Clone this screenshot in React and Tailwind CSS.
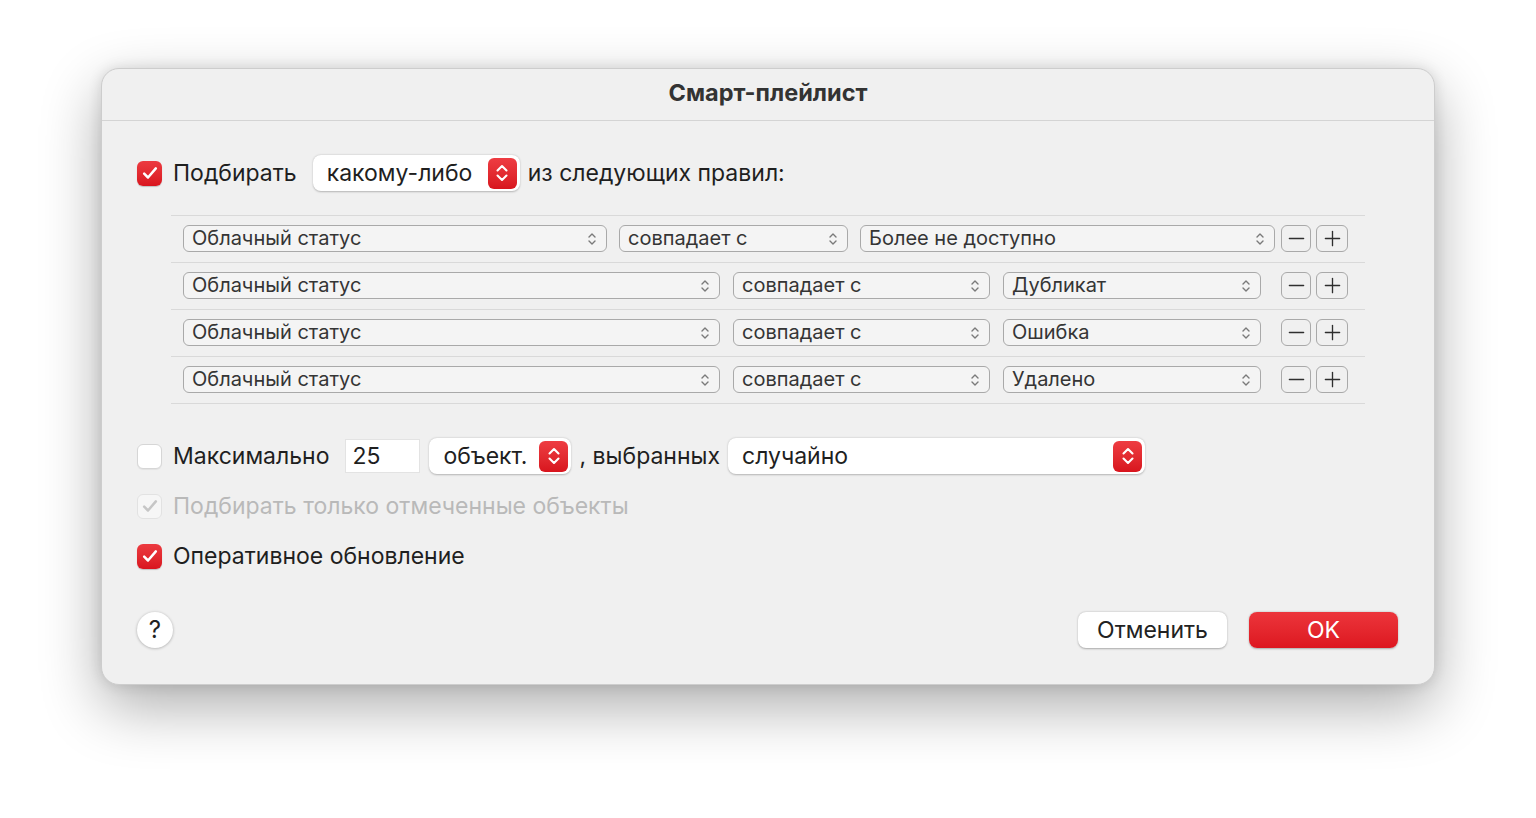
const FONT = { fontFamily: 'Inter, "Noto Sans", sans-serif' };

const Check = ({ color = '#fff' }) => (
  <svg viewBox="0 0 24 24" className="w-[20px] h-[20px]" fill="none" stroke={color} strokeWidth="3" strokeLinecap="round" strokeLinejoin="round">
    <path d="M5 12.8l4.6 4.6L19 6.5" />
  </svg>
);

const Checkbox = ({ state }) => {
  if (state === 'on') {
    return (
      <div className="w-[25px] h-[25px] rounded-[6px] flex items-center justify-center shrink-0 bg-gradient-to-b from-[#ec3a40] to-[#d9141e] shadow-[0_1px_1px_rgba(0,0,0,0.2)]">
        <Check />
      </div>
    );
  }
  if (state === 'disabled') {
    return (
      <div className="w-[25px] h-[25px] rounded-[6px] flex items-center justify-center shrink-0 bg-[#f6f6f6] border border-[#e2e2e2]">
        <Check color="#c6c6c6" />
      </div>
    );
  }
  return <div className="w-[25px] h-[25px] rounded-[6px] shrink-0 bg-white border border-[#d6d6d6] shadow-[0_1px_1px_rgba(0,0,0,0.06)]" />;
};

const Stepper = () => (
  <div className="w-[29px] h-[31px] rounded-[6px] flex items-center justify-center shrink-0 bg-gradient-to-b from-[#ee3c42] to-[#d8141d]">
    <svg viewBox="0 0 16 22" className="w-[16px] h-[22px]" fill="none" stroke="#fff" strokeWidth="2.1" strokeLinecap="round" strokeLinejoin="round">
      <path d="M3.5 8.5L8 4l4.5 4.5" />
      <path d="M3.5 13.5L8 18l4.5-4.5" />
    </svg>
  </div>
);

const SmallChevrons = () => (
  <svg viewBox="0 0 10 16" className="w-[10px] h-[16px] shrink-0" fill="none" stroke="#7a7a7a" strokeWidth="1.4" strokeLinecap="round" strokeLinejoin="round">
    <path d="M2 6l3-3 3 3" />
    <path d="M2 10l3 3 3-3" />
  </svg>
);

const Popup = ({ label, width }) => (
  <div className="h-[36px] rounded-[8px] bg-white flex items-center justify-between pl-[14px] pr-[3px] shadow-[0_0.5px_2px_rgba(0,0,0,0.25)] shrink-0" style={{ width }}>
    <span className="text-[23px] text-[#1f1f1f]">{label}</span>
    <Stepper />
  </div>
);

const RuleSelect = ({ label, w }) => (
  <div className={`${w} h-[27px] rounded-[6px] border border-[#a9a9a9] bg-[#f4f4f4] flex items-center justify-between pl-[8px] pr-[9px] shrink-0`}>
    <span className="text-[20px] leading-none pb-[2px] text-[#353535]">{label}</span>
    <SmallChevrons />
  </div>
);

const SquareBtn = ({ kind, w }) => (
  <div className={`${w} h-[27px] rounded-[6px] border border-[#a9a9a9] flex items-center justify-center shrink-0`}>
    <svg viewBox="0 0 20 20" className="w-[19px] h-[19px]" fill="none" stroke="#2e2e2e" strokeWidth="1.4" strokeLinecap="round">
      <path d="M2.5 10h15" />
      {kind === 'plus' && <path d="M10 2.5v15" />}
    </svg>
  </div>
);

const rules = [
  { w1: 'w-[424px]', w2: 'w-[229px]', w3: 'w-[415px]', gap: 'gap-[12px]', last: 'ml-[6px]', value: 'Более не доступно' },
  { w1: 'w-[537px]', w2: 'w-[257px]', w3: 'w-[258px]', gap: 'gap-[13px]', last: 'ml-[20px]', value: 'Дубликат' },
  { w1: 'w-[537px]', w2: 'w-[257px]', w3: 'w-[258px]', gap: 'gap-[13px]', last: 'ml-[20px]', value: 'Ошибка' },
  { w1: 'w-[537px]', w2: 'w-[257px]', w3: 'w-[258px]', gap: 'gap-[13px]', last: 'ml-[20px]', value: 'Удалено' },
];

export default function App() {
  return (
    <div className="w-full h-[818px] bg-white pt-[68px] pl-[101px]" style={FONT}>
      <div className="w-[1334px] h-[617px] rounded-[18px] bg-[#f0f0f0] border border-[#cdcdcd] shadow-[0_22px_60px_rgba(0,0,0,0.32),0_0_14px_rgba(0,0,0,0.12)] flex flex-col overflow-hidden">
        <div className="h-[52px] shrink-0 flex items-center justify-center border-b border-[#d4d4d4] pb-[3px]">
          <span className="text-[23.5px] font-bold text-[#333333]">Смарт-плейлист</span>
        </div>

        <div className="flex flex-col pl-[35px] pr-[36px] pt-[34px] flex-1">
          <div className="flex items-center h-[36px]">
            <Checkbox state="on" />
            <span className="ml-[11px] text-[23px] text-[#1f1f1f]">Подбирать</span>
            <div className="ml-[16px]">
              <Popup label="какому-либо" width="207px" />
            </div>
            <span className="ml-[8px] text-[23px] text-[#1f1f1f]">из следующих правил:</span>
          </div>

          <div className="mt-[24px] ml-[34px] mr-[33px] border-t border-[#d9d9d9]">
            {rules.map((r, i) => (
              <div key={i} className="h-[47px] border-b border-[#d9d9d9] flex items-center pl-[12px] pb-[1px]">
                <div className={`flex items-center ${r.gap}`}>
                  <RuleSelect label="Облачный статус" w={r.w1} />
                  <RuleSelect label="совпадает с" w={r.w2} />
                  <RuleSelect label={r.value} w={r.w3} />
                </div>
                <div className={`flex items-center gap-[5px] ${r.last}`}>
                  <SquareBtn kind="minus" w="w-[30px]" />
                  <SquareBtn kind="plus" w="w-[32px]" />
                </div>
              </div>
            ))}
          </div>

          <div className="mt-[34px] flex items-center h-[36px]">
            <Checkbox state="off" />
            <span className="ml-[11px] text-[23px] text-[#1f1f1f]">Максимально</span>
            <div className="ml-[16px] w-[75px] h-[34px] bg-white border border-[#e3e3e3] flex items-center pl-[6px] shrink-0">
              <span className="text-[23px] text-[#1f1f1f]">25</span>
            </div>
            <div className="ml-[9px]">
              <Popup label="объект." width="142px" />
            </div>
            <span className="ml-[8px] text-[23px] text-[#1f1f1f]">, выбранных</span>
            <div className="ml-[8px]">
              <Popup label="случайно" width="417px" />
            </div>
          </div>

          <div className="mt-[14px] flex items-center h-[36px]">
            <Checkbox state="disabled" />
            <span className="ml-[11px] text-[23px] text-[#b9b9b9]">Подбирать только отмеченные объекты</span>
          </div>

          <div className="mt-[14px] flex items-center h-[36px]">
            <Checkbox state="on" />
            <span className="ml-[11px] text-[23px] text-[#1f1f1f]">Оперативное обновление</span>
          </div>

          <div className="mt-[38px] flex items-center justify-between">
            <div className="w-[36px] h-[36px] rounded-full bg-white shadow-[0_0.5px_3px_rgba(0,0,0,0.3)] flex items-center justify-center">
              <span className="text-[24px] text-[#222]">?</span>
            </div>
            <div className="flex items-center gap-[22px]">
              <div className="w-[149px] h-[36px] rounded-[8px] bg-white shadow-[0_0.5px_2px_rgba(0,0,0,0.3)] flex items-center justify-center">
                <span className="text-[23px] text-[#222]">Отменить</span>
              </div>
              <div className="w-[149px] h-[36px] rounded-[8px] bg-gradient-to-b from-[#ec343b] to-[#dd161f] shadow-[0_0.5px_2px_rgba(0,0,0,0.3)] flex items-center justify-center">
                <span className="text-[23px] text-white">OK</span>
              </div>
            </div>
          </div>
        </div>
      </div>
    </div>
  );
}
